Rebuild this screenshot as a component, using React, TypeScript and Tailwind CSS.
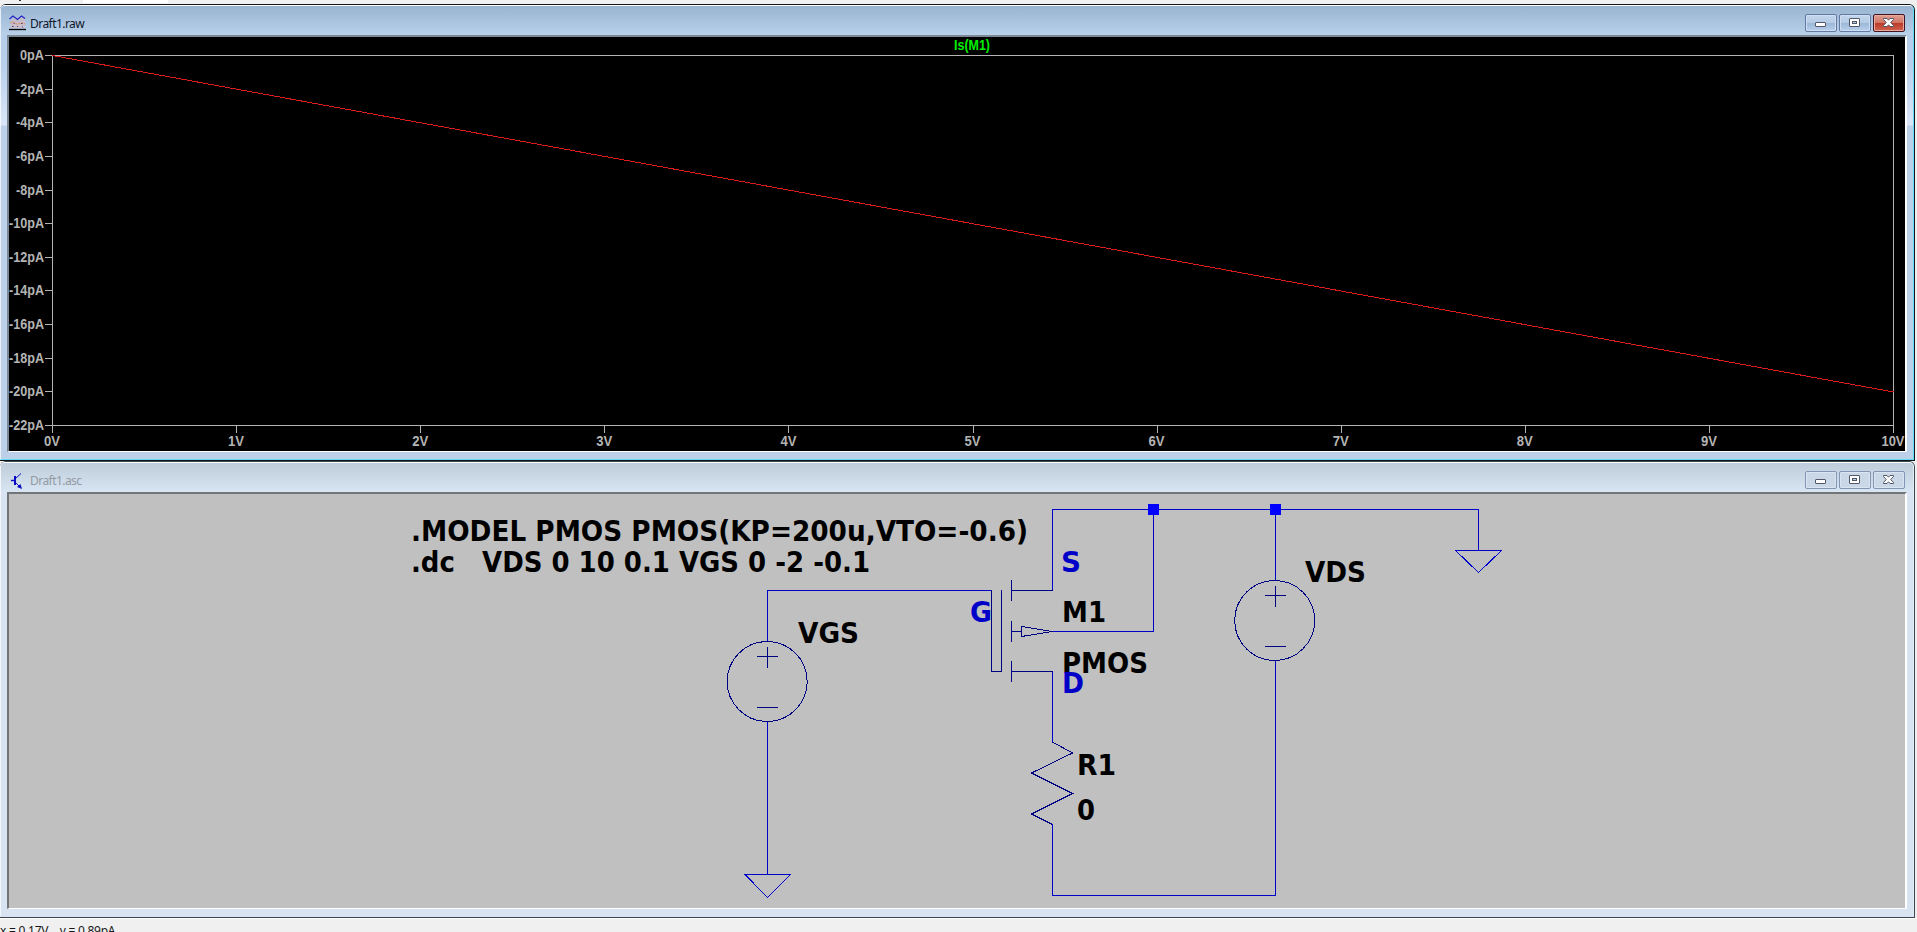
import React from "react";

type WindowProps = {
  title: string;
  active: boolean;
  icon: React.ReactNode;
  children: React.ReactNode;
};

function WaveIcon() {
  return (
    <svg width="17" height="17" viewBox="0 0 17 17" fill="none">
      <path d="M2 6L6 2L9 5L13 2L16 4V13H1Z" fill="#d8b9bd" fillOpacity="0.6" />
      <path d="M0.500 4L4 1L8.500 4.500L12.500 1L16 3.500" stroke="#2424c4" strokeWidth="1.2" />
      <path d="M1 8L4 7L8 9L13 8L16 9" stroke="#dc9478" strokeWidth="1.3" strokeDasharray="2 1" />
      <path d="M3 11.500h1.500M12 8.500h1.500M4.500 8.500h1M8 11.500h1M13 12h1" stroke="#5a3a58" />
      <path d="M0 14.500H17" stroke="#000" strokeWidth="1.3" />
    </svg>
  );
}

function TransistorIcon() {
  return (
    <svg width="17" height="17" viewBox="0 0 17 17" fill="none" stroke="#0b0bc4">
      <path d="M2 8.5H6" strokeWidth="1.4" />
      <path d="M6 4V13" strokeWidth="2" />
      <path d="M6 7L12 1.500M6 10L12 16" strokeWidth="1" />
      <path d="M13 17L8 15L11.500 12Z" fill="#0b0bc4" stroke="none" />
    </svg>
  );
}

function CaptionButton({ kind, active }: { kind: "min" | "max" | "close"; active: boolean }) {
  const red = kind === "close" && active;
  const face = red
    ? "border-[#431422] bg-[linear-gradient(#e0a093_0%,#d07565_48%,#b93a27_50%,#cf6450_100%)] shadow-[inset_0_0_0_1px_#e9a99c]"
    : active
      ? "border-[#6279a3] bg-[linear-gradient(#c3d6ec_0%,#b5cbe5_48%,#9cb6d6_50%,#b6d0ed_100%)] shadow-[inset_0_0_0_1px_#cfdff1]"
      : "border-[#8495b3] bg-[#c9d7e6] shadow-[inset_0_0_0_1px_#dae5f1]";
  return (
    <div className={"flex h-[18px] w-8 items-center justify-center rounded-[2px] border " + face}>
      <svg width="14" height="12" viewBox="0 0 14 12" fill="none">
        {kind === "min" && <rect x="1.500" y="5.500" width="10" height="4" rx="0.5" fill="#fff" stroke="#535666" />}
        {kind === "max" && (
          <>
            <rect x="1.500" y="1.500" width="10" height="8" rx="0.5" fill="#fff" stroke="#535666" />
            <rect x="4.500" y="4.500" width="4" height="2" fill="#b6cbe4" stroke="#535666" />
          </>
        )}
        {kind === "close" && (
          <path
            d="M1.500 1.500H5L6.500 3.200L8 1.500H11.500V2.500L8.700 5.500L11.500 8.500V9.500H8L6.500 7.800L5 9.500H1.500V8.500L4.300 5.500L1.500 2.500Z"
            fill="#fff"
            stroke="#535666"
          />
        )}
      </svg>
    </div>
  );
}

function MdiWindow({ title, active, icon, children }: WindowProps) {
  return (
    <section
      className={
        "flex h-[457px] w-[1915px] flex-col rounded-t-[6px] border-t border-r border-b " +
        (active ? "border-[#10151c] bg-[#bcd0e9]" : "border-[#3c4650] bg-[#d8e4f1]")
      }
    >
      <div
        className={
          "flex grow flex-col rounded-t-[5px] border-t border-r border-b border-l border-t-white border-l-white/70 " +
          (active
            ? "border-r-[#5fdcf3] border-b-[#5fdcf3] bg-[linear-gradient(#b4cce8_0px,#b9d0ec_60px,#dbe6f8_119px,#bcd0e9_120px)]"
            : "border-r-[#e4eef8] border-b-[#d8e4f1]")
        }
      >
        <header
          className={
            "flex h-[29px] shrink-0 items-center rounded-t-[4px] pt-[5px] pr-2 pl-2 bg-linear-to-b " +
            (active ? "from-[#99b4d1] to-[#b9d1ea]" : "from-[#bfcddb] to-[#d8e5f2]")
          }
        >
          {icon}
          <h1
            className={
              "ml-1 grow font-['Noto_Sans',sans-serif] text-[12px] leading-[17px] tracking-[-0.55px] " +
              (active ? "text-[#10182c]" : "text-[#929aa4]")
            }
          >
            {title}
          </h1>
          <div className="flex gap-0.5 pb-px">
            <CaptionButton kind="min" active={active} />
            <CaptionButton kind="max" active={active} />
            <CaptionButton kind="close" active={active} />
          </div>
        </header>
        <div
          className={
            "ml-1.5 w-[1900px] border-t-2 border-r-2 border-b border-l-2 border-r-white border-b-white " +
            (active ? "border-t-[#7b8896] border-l-[#7b8896]" : "border-t-[#737679] border-l-[#737679]")
          }
        >
          {children}
        </div>
      </div>
    </section>
  );
}

const yLabels = ["0pA", "-2pA", "-4pA", "-6pA", "-8pA", "-10pA", "-12pA", "-14pA", "-16pA", "-18pA", "-20pA", "-22pA"];
const xLabels = ["0V", "1V", "2V", "3V", "4V", "5V", "6V", "7V", "8V", "9V", "10V"];
const yWidths: Record<number, number> = { 3: 24, 4: 28, 5: 35 };

function Plot() {
  return (
    <svg
      className="block bg-black font-['Liberation_Sans',Arial,sans-serif] text-[14px] font-bold"
      width="1896"
      height="414"
      viewBox="9 37 1896 414"
    >
      <g stroke="#b4b4b4" fill="none" shapeRendering="crispEdges">
        <rect x="52.5" y="55.5" width="1841" height="370" />
        {yLabels.map((l, i) => (
          <path key={l} d={`M45 ${Math.round(55 + i * 33.64) + 0.5}H52`} />
        ))}
        {xLabels.map((l, i) => (
          <path key={l} d={`M${Math.round(52 + i * 184.1) + 0.5} 425V433`} />
        ))}
      </g>
      <g fill="#b4b4b4">
        {yLabels.map((l, i) => (
          <text key={l} x="44" y={Math.round(60 + i * 33.64)} textAnchor="end" textLength={yWidths[l.length]} lengthAdjust="spacingAndGlyphs">
            {l}
          </text>
        ))}
        {xLabels.map((l, i) => (
          <text key={l} x={52 + i * 184.1} y="446" textAnchor="middle" textLength={l.length === 3 ? 23 : 16} lengthAdjust="spacingAndGlyphs">
            {l}
          </text>
        ))}
      </g>
      <text x="954" y="50" fill="#00f000" textLength="36" lengthAdjust="spacingAndGlyphs" className="text-[14px]">
        Is(M1)
      </text>
      <path d="M52.5 55.5L1893.5 392" stroke="#dc1c1c" shapeRendering="crispEdges" />
    </svg>
  );
}

type Label = { t: string; x: number; y: number; w: number; net?: boolean };

const labels: Label[] = [
  { t: ".MODEL PMOS PMOS(KP=200u,VTO=-0.6)", x: 411, y: 540.5, w: 617 },
  { t: ".dc\u00a0\u00a0 VDS 0 10 0.1 VGS 0 -2 -0.1", x: 411, y: 571.5, w: 459 },
  { t: "VGS", x: 798, y: 642.5, w: 61 },
  { t: "VDS", x: 1305, y: 581.5, w: 61 },
  { t: "M1", x: 1062, y: 621.5, w: 44 },
  { t: "PMOS", x: 1062, y: 672.5, w: 86 },
  { t: "R1", x: 1077, y: 774.5, w: 39 },
  { t: "0", x: 1077, y: 819.5, w: 18 },
  { t: "S", x: 1061, y: 571.5, w: 20, net: true },
  { t: "G", x: 970, y: 621.5, w: 22, net: true },
  { t: "D", x: 1062, y: 692.5, w: 22, net: true },
];

function Source({ cx, cy }: { cx: number; cy: number }) {
  return (
    <g>
      <circle cx={cx - 0.3} cy={cy} r="40" />
      <path d={`M${cx - 10.5} ${cy - 25}H${cx + 10.5}M${cx} ${cy - 35}V${cy - 14}M${cx - 10.5} ${cy + 26}H${cx + 10.5}`} />
    </g>
  );
}

function Schematic() {
  return (
    <svg className="block bg-[#c0c0c0] font-['DejaVu_Sans',Verdana,sans-serif] text-[28px] font-bold" width="1896" height="414" viewBox="9 494 1896 414">
      <g fill="none" stroke="#0000c8" shapeRendering="crispEdges">
        <path d="M767.5 641V590.500H991.500M767.500 721V874M1052.500 590V509.500H1478.500V550M1153.500 509V631.500H1052M1275.500 509V581M1052.500 671V742M1052.500 824V895.500H1275.500V661" />
        <path d="M745 874.500H790.500L767.500 897.500ZM1455.500 550.500H1501.500L1478.500 572.500Z" />
      </g>
      <g fill="none" stroke="#000082" shapeRendering="crispEdges">
        <path d="M991.500 590V671.500H1001.500V590M1011.500 580V601M1011.500 621V642M1011.500 661V682M1011 590.500H1053M1011 671.500H1053M1011 631.500H1021M1021.500 626.500V636.500L1052 631.500ZM1050 631.500H1053" />
        <path d="M1052.500 742L1072.500 753L1031.500 773L1072.500 793.500L1031.500 814L1052.500 824.500" />
        <Source cx={767.5} cy={681.5} />
        <Source cx={1275} cy={620.5} />
      </g>
      <path d="M1148 504h11v11h-11ZM1270 504h11v11h-11Z" fill="#0000ff" />
      {labels.map((l) => (
        <text key={l.t} x={l.x} y={l.y} textLength={l.w} lengthAdjust="spacingAndGlyphs" fill={l.net ? "#0000c8" : "#000"}>
          {l.t}
        </text>
      ))}
    </svg>
  );
}

export default function App() {
  return (
    <main className="flex h-[932px] w-[1917px] flex-col overflow-hidden bg-[#f0f0f0]">
      <div className="flex h-1 shrink-0">
        <div className="ml-[19px] h-px w-0.5 bg-[#333]" />
        <div className="ml-[62px] h-[3px] w-[85px] bg-white" />
      </div>
      <MdiWindow title="Draft1.raw" active icon={<WaveIcon />}>
        <Plot />
      </MdiWindow>
      <MdiWindow title="Draft1.asc" active={false} icon={<TransistorIcon />}>
        <Schematic />
      </MdiWindow>
      <footer className="h-[14px] shrink-0 overflow-hidden border-t border-white pt-1 font-['Noto_Sans',sans-serif] text-[12px] leading-[16px] tracking-[-0.25px] whitespace-pre text-[#181818]">
        {"x = 0.17V    y = 0.89pA"}
      </footer>
    </main>
  );
}
